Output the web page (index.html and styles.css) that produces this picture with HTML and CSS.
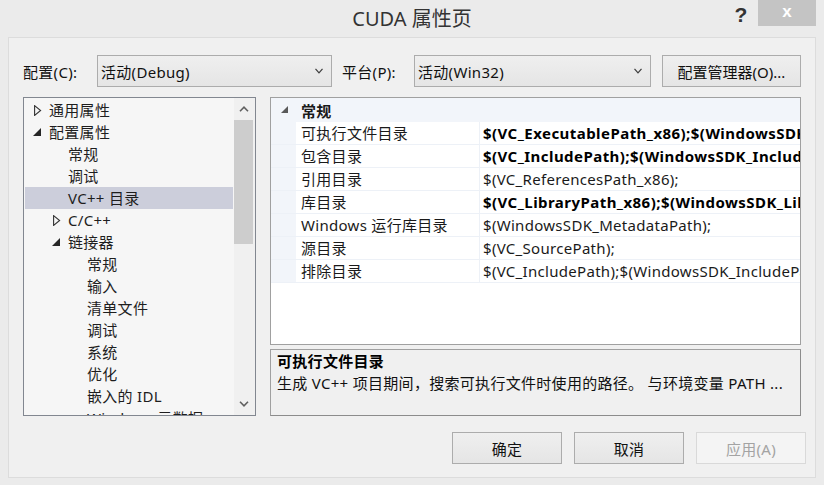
FILE: index.html
```html
<!DOCTYPE html>
<html lang="zh-CN">
<head>
<meta charset="utf-8">
<title>CUDA 属性页</title>
<link rel="stylesheet" href="styles.css">
</head>
<body>
<div class="window">
  <header class="titlebar">
    <div class="tb-spacer"></div>
    <div class="title">CUDA 属性页</div>
    <div class="controls">
      <span class="help">?</span>
      <span class="close">x</span>
    </div>
  </header>

  <div class="panel">
    <div class="config-row">
      <label class="lbl lbl-config">配置(C):</label>
      <div class="combo combo-config">
        <span class="combo-text">活动(Debug)</span>
        <svg class="combo-arrow" width="8" height="6" viewBox="0 0 8 6"><polyline points="0.5,0.8 4,4.8 7.5,0.8" fill="none" stroke="#3c3c3c" stroke-width="1.2"/></svg>
      </div>
      <label class="lbl lbl-platform">平台(P):</label>
      <div class="combo combo-platform">
        <span class="combo-text">活动(Win32)</span>
        <svg class="combo-arrow" width="8" height="6" viewBox="0 0 8 6"><polyline points="0.5,0.8 4,4.8 7.5,0.8" fill="none" stroke="#3c3c3c" stroke-width="1.2"/></svg>
      </div>
      <button class="btn btn-manager">配置管理器(O)...</button>
    </div>

    <div class="main">
      <div class="tree">
        <ul class="tree-list">
          <li class="node lv0"><span class="tw"><svg width="8" height="11" viewBox="0 0 8 11"><polygon points="0.6,0.6 6.6,5.5 0.6,10.4" fill="none" stroke="#333" stroke-width="1.1"/></svg></span>通用属性</li>
          <li class="node lv0"><span class="tw"><svg class="filled" width="8" height="8" viewBox="0 0 8 8"><polygon points="8,0 8,8 0,8" fill="#262626"/></svg></span>配置属性</li>
          <li class="node lv1"><span class="tw"></span>常规</li>
          <li class="node lv1"><span class="tw"></span>调试</li>
          <li class="node lv1 selected"><span class="tw"></span>VC++ 目录</li>
          <li class="node lv1"><span class="tw"><svg width="8" height="11" viewBox="0 0 8 11"><polygon points="0.6,0.6 6.6,5.5 0.6,10.4" fill="none" stroke="#333" stroke-width="1.1"/></svg></span>C/C++</li>
          <li class="node lv1"><span class="tw"><svg class="filled" width="8" height="8" viewBox="0 0 8 8"><polygon points="8,0 8,8 0,8" fill="#262626"/></svg></span>链接器</li>
          <li class="node lv2"><span class="tw"></span>常规</li>
          <li class="node lv2"><span class="tw"></span>输入</li>
          <li class="node lv2"><span class="tw"></span>清单文件</li>
          <li class="node lv2"><span class="tw"></span>调试</li>
          <li class="node lv2"><span class="tw"></span>系统</li>
          <li class="node lv2"><span class="tw"></span>优化</li>
          <li class="node lv2"><span class="tw"></span>嵌入的 IDL</li>
          <li class="node lv2"><span class="tw"></span>Windows 元数据</li>
        </ul>
        <div class="vscroll">
          <div class="sb-btn"><svg width="10" height="6" viewBox="0 0 10 6"><polyline points="1,5.2 5,1.2 9,5.2" fill="none" stroke="#606060" stroke-width="1.6"/></svg></div>
          <div class="sb-thumb"></div>
          <div class="sb-track"></div>
          <div class="sb-btn"><svg width="10" height="6" viewBox="0 0 10 6"><polyline points="1,0.8 5,4.8 9,0.8" fill="none" stroke="#606060" stroke-width="1.6"/></svg></div>
        </div>
      </div>

      <div class="right">
        <div class="grid">
          <div class="grid-header">
            <span class="gh-arrow"><svg width="7" height="7" viewBox="0 0 7 7"><polygon points="7,0 7,7 0,7" fill="#595959"/></svg></span>
            <span class="gh-text">常规</span>
          </div>
          <div class="prop"><span class="pm"></span><span class="pn">可执行文件目录</span><span class="pv bold">$(VC_ExecutablePath_x86);$(WindowsSDK_ExecutablePath);$(VSInstallDir)</span></div>
          <div class="prop"><span class="pm"></span><span class="pn">包含目录</span><span class="pv bold">$(VC_IncludePath);$(WindowsSDK_IncludePath);</span></div>
          <div class="prop"><span class="pm"></span><span class="pn">引用目录</span><span class="pv">$(VC_ReferencesPath_x86);</span></div>
          <div class="prop"><span class="pm"></span><span class="pn">库目录</span><span class="pv bold">$(VC_LibraryPath_x86);$(WindowsSDK_LibraryPath_x86);</span></div>
          <div class="prop"><span class="pm"></span><span class="pn">Windows 运行库目录</span><span class="pv">$(WindowsSDK_MetadataPath);</span></div>
          <div class="prop"><span class="pm"></span><span class="pn">源目录</span><span class="pv">$(VC_SourcePath);</span></div>
          <div class="prop"><span class="pm"></span><span class="pn">排除目录</span><span class="pv">$(VC_IncludePath);$(WindowsSDK_IncludePath);$(MSBuild)</span></div>
        </div>
        <div class="desc">
          <div class="desc-title">可执行文件目录</div>
          <div class="desc-text">生成 VC++ 项目期间，搜索可执行文件时使用的路径。 与环境变量 PATH ...</div>
        </div>
      </div>
    </div>

    <div class="buttons">
      <button class="btn dlg">确定</button>
      <button class="btn dlg">取消</button>
      <button class="btn dlg disabled">应用(A)</button>
    </div>
  </div>
</div>
</body>
</html>
```

FILE: styles.css
```css
* { box-sizing: border-box; }

html, body {
  margin: 0;
  padding: 0;
}

body {
  width: 824px;
  height: 485px;
  overflow: hidden;
  background: #ebebeb;
  font-family: "Noto Sans", "Noto Sans CJK SC", sans-serif;
  font-size: 15px;
  letter-spacing: 0.3px;
  color: #1a1a1a;
}

.window {
  width: 824px;
  height: 485px;
  display: flex;
  flex-direction: column;
}

/* ---------- title bar ---------- */
.titlebar {
  height: 37px;
  display: grid;
  grid-template-columns: 1fr auto 1fr;
  align-items: start;
}

.title {
  font-size: 20px;
  line-height: 38px;
  letter-spacing: 0;
  color: #333;
}

.controls {
  justify-self: end;
  display: flex;
  align-items: flex-start;
  margin-right: 8px;
}

.help {
  width: 20px;
  margin-right: 7px;
  text-align: center;
  font-family: "Liberation Sans", sans-serif;
  font-weight: bold;
  font-size: 21px;
  line-height: 29px;
  letter-spacing: 0;
  color: #333;
}

.close {
  width: 58px;
  height: 26px;
  background: #c4c4c4;
  color: #fff;
  text-align: center;
  font-family: "Liberation Sans", sans-serif;
  font-weight: bold;
  font-size: 17px;
  line-height: 24px;
  letter-spacing: 0;
}

/* ---------- panel ---------- */
.panel {
  margin: 0 8px;
  height: 441px;
  border: 1px solid #dcdcdc;
  background: #f0f0f0;
  padding: 17px 14px 0 14px;
  display: flex;
  flex-direction: column;
}

.config-row {
  display: flex;
  align-items: center;
  height: 32px;
}

.lbl {
  color: #111;
  white-space: nowrap;
}

.lbl-config { width: 74px; }
.lbl-platform { width: 72px; margin-left: 10px; }

.combo {
  height: 32px;
  border: 1px solid #acacac;
  background: linear-gradient(#efefef, #e5e5e5);
  display: flex;
  align-items: center;
  justify-content: space-between;
  padding: 0 8px 0 3px;
}

.combo-config { width: 235px; }
.combo-platform { width: 237px; }

.combo-text { color: #111; }

.btn {
  font-family: inherit;
  font-size: 15px;
  letter-spacing: 0.3px;
  color: #111;
  height: 32px;
  border: 1px solid #acacac;
  background: linear-gradient(#efefef, #e5e5e5);
  padding: 0;
  margin: 0;
}

.btn-manager {
  width: 139px;
  margin-left: 11px;
  letter-spacing: 0;
}

/* ---------- main area ---------- */
.main {
  margin-top: 10px;
  display: flex;
  gap: 14px;
}

.tree {
  width: 233px;
  height: 319px;
  border: 1px solid #828790;
  background: #f6f6f6;
  display: flex;
  overflow: hidden;
}

.tree-list {
  list-style: none;
  margin: 0;
  padding: 1px 1px 0 1px;
  flex: 1;
  min-width: 0;
  overflow: hidden;
}

.node {
  height: 22px;
  line-height: 22px;
  display: flex;
  align-items: center;
  white-space: nowrap;
  color: #1e1e1e;
}

.node.selected { background: #cccedb; }

.lv0 { padding-left: 0; }
.lv1 { padding-left: 19px; }
.lv2 { padding-left: 38px; }

.tw {
  width: 24px;
  flex: none;
  display: flex;
  align-items: center;
  padding-left: 9px;
}

.tw svg { display: block; }
.tw svg.filled { margin-left: -1px; margin-top: -1px; }

.vscroll {
  width: 21px;
  flex: none;
  background: #f0f0f0;
  display: flex;
  flex-direction: column;
}

.sb-btn {
  height: 22px;
  display: flex;
  align-items: center;
  justify-content: center;
}

.sb-btn svg { display: block; margin-left: -2px; }

.sb-thumb {
  height: 124px;
  width: 19px;
  background: #cdcdcd;
}

.sb-track { flex: 1; }

/* ---------- property grid ---------- */
.right {
  width: 531px;
  display: flex;
  flex-direction: column;
  gap: 4px;
}

.grid {
  height: 248px;
  border: 1px solid #a0a0a0;
  background: #fff;
  overflow: hidden;
}

.grid-header {
  height: 24px;
  background: #f2f5fa;
  display: flex;
  align-items: center;
}

.gh-arrow {
  width: 30px;
  flex: none;
  padding-left: 10px;
  display: flex;
  align-items: center;
}

.gh-arrow svg { display: block; margin-top: -2px; }

.gh-text {
  font-weight: bold;
  color: #1a1a1a;
}

.prop {
  height: 23px;
  display: flex;
  border-bottom: 1px solid #edf1f7;
  white-space: nowrap;
}

.pm {
  width: 25px;
  flex: none;
  background: #f2f5fa;
}

.pn {
  width: 184px;
  flex: none;
  padding-left: 5px;
  line-height: 22px;
  border-right: 1px solid #edf1f7;
  color: #1a1a1a;
}

.pv {
  flex: 1;
  min-width: 0;
  overflow: hidden;
  padding-left: 3px;
  line-height: 22px;
  color: #1a1a1a;
}

.pv.bold { font-weight: bold; color: #000; letter-spacing: 0.45px; }

/* ---------- description ---------- */
.desc {
  height: 67px;
  border: 1px solid #a0a0a0;
  border-right-color: #8c8c8c;
  border-bottom-color: #8c8c8c;
  background: #f0f0f0;
  padding: 0 6px;
}

.desc-title {
  font-weight: bold;
  line-height: 22px;
  color: #000;
}

.desc-text {
  line-height: 22px;
  white-space: nowrap;
  color: #111;
}

/* ---------- dialog buttons ---------- */
.buttons {
  margin-top: 16px;
  margin-right: -5px;
  display: flex;
  justify-content: flex-end;
  gap: 12px;
}

.btn.dlg { width: 110px; }

.btn.disabled {
  background: #f4f4f4;
  border-color: #d9d9d9;
  color: #a3a3a3;
}
```
